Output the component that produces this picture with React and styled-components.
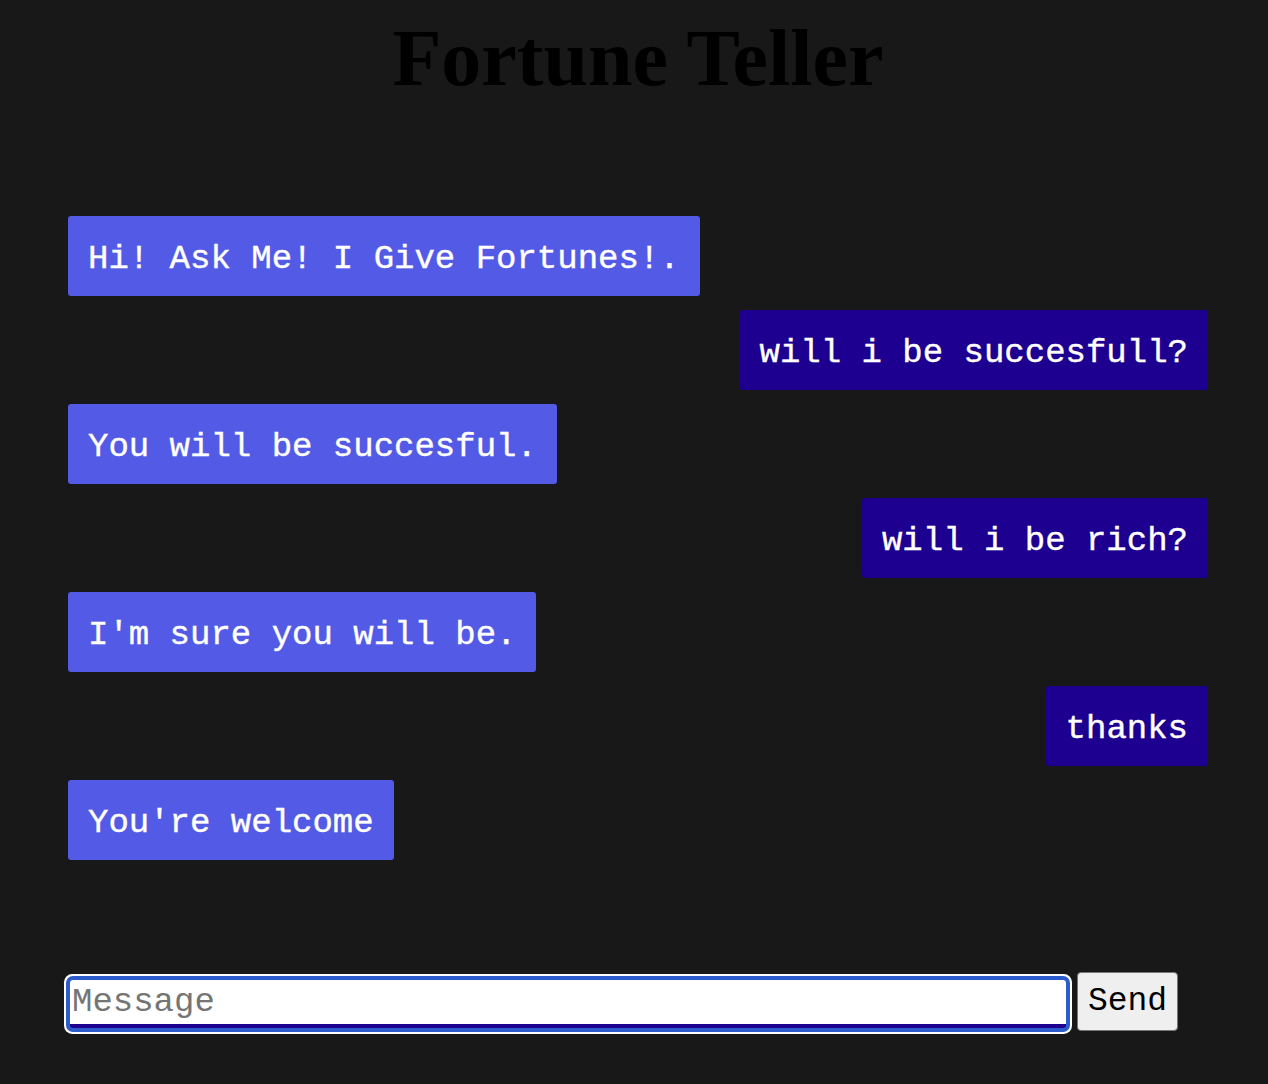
import React from "react";
import styled, { createGlobalStyle } from "styled-components";

const Global = createGlobalStyle`
  html, body { margin: 0; padding: 0; background: #181818; }
  body { font-family: "Liberation Mono", "Courier New", monospace; }
`;

const Page = styled.div`
  min-height: 1084px;
  box-sizing: border-box;
  padding: 14px 60px 0 68px;
  display: flex;
  flex-direction: column;
`;

const Title = styled.h1`
  margin: 0;
  font-family: "Liberation Serif", "Times New Roman", serif;
  font-weight: bold;
  font-size: 80px;
  line-height: 89px;
  color: #000;
  text-align: center;
`;

const Messages = styled.div`
  margin-top: 113px;
  display: flex;
  flex-direction: column;
  gap: 14px;
`;

const Bubble = styled.div`
  align-self: ${(p) => (p.$mine ? "flex-end" : "flex-start")};
  background: ${(p) => (p.$mine ? "#1d0090" : "#535be6")};
  color: #fff;
  border-radius: 3px;
  padding: 24px 20px 18px;
  font-family: "Liberation Mono", "Courier New", monospace;
  font-weight: normal;
  font-size: 34px;
  line-height: 38px;
  white-space: pre;
  -webkit-text-stroke: 0.4px #fff;
`;

const Form = styled.form`
  margin-top: 116px;
  display: flex;
  align-items: center;
  gap: 10px;
`;

const Input = styled.input`
  margin-left: 2px;
  margin-right: 1px;
  width: 996px;
  height: 48px;
  box-sizing: border-box;
  border: none;
  border-bottom: 4px solid #1d0090;
  border-radius: 3px;
  background: #fff;
  padding: 0 2px;
  font-family: "Liberation Mono", "Courier New", monospace;
  font-size: 34px;
  color: #000;
  outline: none;
  box-shadow: 0 0 0 4px #2c5bcc, 0 0 0 6px #fff;
  &::placeholder { color: #757575; }
`;

const Button = styled.button`
  width: 101px;
  height: 59px;
  box-sizing: border-box;
  margin-top: -4px;
  background: #efefef;
  border: 1.5px solid #767676;
  border-radius: 4px;
  font-family: "Liberation Mono", "Courier New", monospace;
  font-size: 33px;
  color: #000;
  padding: 0;
`;

const msgs = [
  ["Hi! Ask Me! I Give Fortunes!.", false],
  ["will i be succesfull?", true],
  ["You will be succesful.", false],
  ["will i be rich?", true],
  ["I'm sure you will be.", false],
  ["thanks", true],
  ["You're welcome", false],
];

export default function App() {
  return (
    <>
      <Global />
      <Page>
        <Title>Fortune Teller</Title>
        <Messages>
          {msgs.map(([t, m], i) => (
            <Bubble key={i} $mine={m}>{t}</Bubble>
          ))}
        </Messages>
        <Form onSubmit={(e) => e.preventDefault()}>
          <Input placeholder="Message" />
          <Button type="submit">Send</Button>
        </Form>
      </Page>
    </>
  );
}
